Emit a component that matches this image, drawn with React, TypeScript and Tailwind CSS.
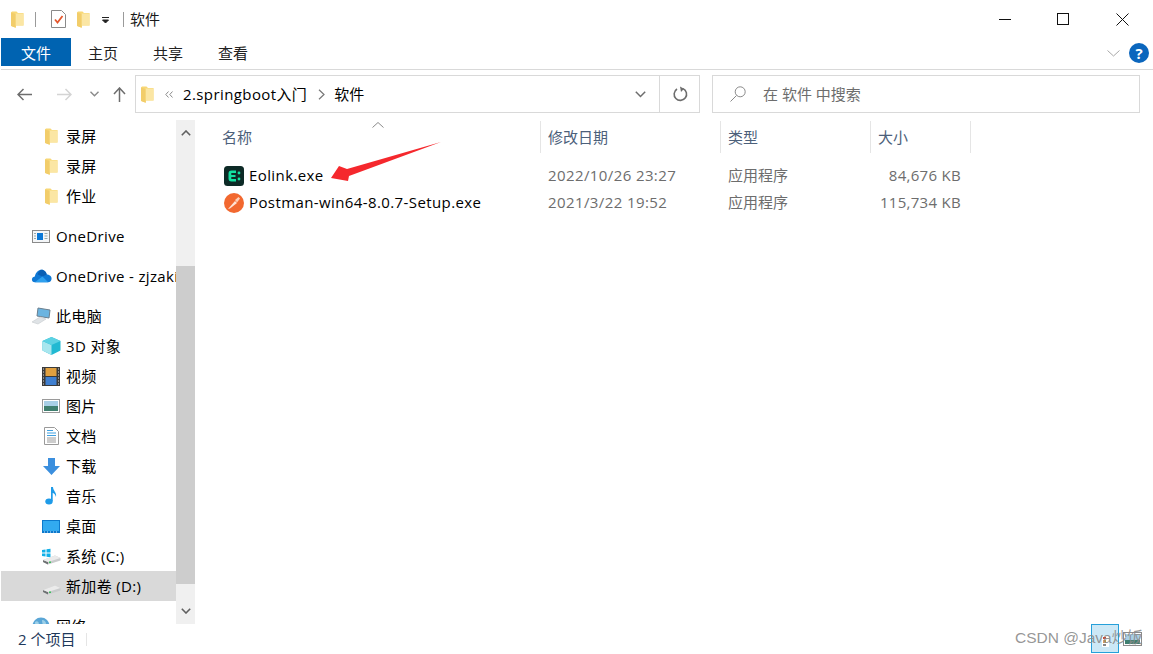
import React from "react";

const FONT = '"Open Sans","Noto Sans CJK SC",sans-serif';

function Folder({ className = "" }: { className?: string }) {
  return (
    <svg viewBox="0 0 13 17" className={className} width="13" height="17">
      <path d="M0 1.5 L1 .5 L5.5 .5 L7 2 L12.5 2 L12.5 14.5 L5 14.5 L5 16.8 L0.5 15 Z" fill="#f8d775" />
      <path d="M4.5 2.5 L12.5 2.5 L12.5 14.5 L4.5 14.5 Z" fill="#fbe6a4" />
      <path d="M0 1.5 L4.5 3 L4.5 16.8 L0 15 Z" fill="#f2cd6a" />
    </svg>
  );
}

function SidebarRow({
  label,
  icon,
  indent = 1,
  selected = false,
  mt = false,
}: {
  label: string;
  icon: React.ReactNode;
  indent?: 0 | 1;
  selected?: boolean;
  mt?: boolean;
}) {
  return (
    <div
      className={`h-[30px] shrink-0 flex items-center whitespace-nowrap overflow-hidden ${selected ? "bg-[#d9d9d9]" : ""} ${mt ? "mt-[10px]" : ""}`}
    >
      <div className={`shrink-0 flex justify-center items-center ${indent ? "ml-[40px] w-[20px] mr-[5px]" : "ml-[29px] w-[22px] mr-[4px]"}`}>
        {icon}
      </div>
      <span className="text-[15px] tracking-[0.35px] text-black mt-[1px]">{label}</span>
    </div>
  );
}

const I = {
  Screen: () => (
    <svg width="18" height="15" viewBox="0 0 18 15">
      <rect x=".5" y="1.5" width="17" height="12" fill="#f4f6f8" stroke="#8a8a8a" />
      <rect x="5" y="4" width="6" height="7" fill="#0a78d7" />
      <path d="M12.5 4.5h3M12.5 7h3M12.5 9.5h3M2 4.5h2M2 7h2M2 9.5h2" stroke="#9aa" />
    </svg>
  ),
  Cloud: () => (
    <svg width="21" height="14" viewBox="0 0 22 14">
      <path d="M4 13.5 C0 13.5 0 8 4 7.5 C5 3 8 .5 11 .5 C14 .5 16 3 16.5 5.5 C20 5.5 22 8 21.5 10.5 C21 12.5 20 13.5 18 13.5 Z" fill="#0f78d4" />
      <path d="M7 5.5 C8 2 10 .5 11 .5 C14 .5 16 3 16.5 5.5 L12 7.5 Z" fill="#0a5fb4" />
      <path d="M4 13.5 L12 7.5 L18 13.5 Z" fill="#2ea0ee" />
    </svg>
  ),
  PC: () => (
    <svg width="20" height="18" viewBox="0 0 20 18">
      <path d="M7 1 L19 3 L18 11 L6 9 Z" fill="#6bb4e0" stroke="#6b7f8e" />
      <path d="M1 15 L9 10 L15 12 L7 17 Z" fill="#dfe3e6" stroke="#c4c9cc" strokeWidth=".6" />
    </svg>
  ),
  Cube: () => (
    <svg width="19" height="18" viewBox="0 0 19 18">
      <path d="M9.5 0 L18.5 4 L18.5 13.5 L9.5 18 L.5 13.5 L.5 4 Z" fill="#21b9d2" />
      <path d="M.5 4 L9.5 8 L9.5 18 L.5 13.5 Z" fill="#a8e6ee" />
      <path d="M9.5 0 L18.5 4 L9.5 8 L.5 4 Z" fill="#5dd2e3" />
    </svg>
  ),
  Film: () => (
    <svg width="18" height="19" viewBox="0 0 18 19">
      <rect width="18" height="19" fill="#3a3a3a" />
      <rect x="3.5" y="1" width="11" height="8" fill="#e0a040" />
      <rect x="3.5" y="10" width="11" height="8" fill="#3f7fd0" />
      <path d="M1 2h1M1 5h1M1 8h1M1 11h1M1 14h1M1 17h1M16 2h1M16 5h1M16 8h1M16 11h1M16 14h1M16 17h1" stroke="#ddd" />
    </svg>
  ),
  Pic: () => (
    <svg width="18" height="14" viewBox="0 0 18 14">
      <rect x=".5" y=".5" width="17" height="13" fill="#fff" stroke="#9a9a9a" />
      <rect x="2" y="2" width="14" height="5" fill="#a8cfe6" />
      <rect x="2" y="7" width="14" height="5" fill="#3f7f6f" />
    </svg>
  ),
  Doc: () => (
    <svg width="15" height="18" viewBox="0 0 15 18">
      <path d="M.5 .5 L10.5 .5 L14.5 4.5 L14.5 17.5 L.5 17.5 Z" fill="#fff" stroke="#9a9a9a" />
      <path d="M3 3.5h6M3 6h9M3 8.5h9" stroke="#3fa0e0" />
      <path d="M3 11h9M3 13h9M3 15h9" stroke="#9a9a9a" />
    </svg>
  ),
  Down: () => (
    <svg width="17" height="17" viewBox="0 0 17 17">
      <path d="M5 0 L12 0 L12 8 L17 8 L8.5 17 L0 8 L5 8 Z" fill="#3b8fde" />
    </svg>
  ),
  Music: () => (
    <svg width="12" height="18" viewBox="0 0 12 18">
      <ellipse cx="4" cy="14.5" rx="3.7" ry="3" fill="#1e9be8" />
      <path d="M6 14 L6 0 L8 0 C8 4 12 5 11 10 C10 7 9 6 7.7 6 L7.7 14 Z" fill="#1e9be8" />
    </svg>
  ),
  Desktop: () => (
    <svg width="18" height="13" viewBox="0 0 18 13">
      <rect width="18" height="13" fill="#0c79cc" />
      <rect x="1" y="1" width="16" height="10" fill="#32aaf0" />
      <path d="M2 12h14" stroke="#cfeaff" strokeDasharray="1 2" />
    </svg>
  ),
  Drive: ({ win }: { win?: boolean }) => (
    <svg width="19" height="17" viewBox="0 0 19 17">
      {win && <path d="M0 2 L3.5 1.5 L3.5 4.5 L0 4.5 Z M4.5 1.3 L8.5 .7 L8.5 4.5 L4.5 4.5 Z M0 5.5 L3.5 5.5 L3.5 8.5 L0 8 Z M4.5 5.5 L8.5 5.5 L8.5 9.3 L4.5 8.7 Z" fill="#12b0e8" />}
      <path d="M1 12 L13 7.5 L18.5 10 L18.5 12.5 L6 16.5 L1 14 Z" fill="#c9cbcc" />
      <path d="M1 12 L6 14 L6 16.5 L1 14 Z" fill="#6f7173" />
      <path d="M6 14 L18.5 10 L13 7.5 L1 12 Z" fill="#ebebeb" />
      <rect x="7" y="13.5" width="2" height="1.5" fill="#3fbf5f" />
    </svg>
  ),
  Globe: () => (
    <svg width="18" height="18" viewBox="0 0 18 18">
      <circle cx="9" cy="9" r="8.5" fill="#5aa6d6" />
      <path d="M3 5 C6 3 8 6 6 9 C4 10 3 8 3 5 M10 3 C14 3 15 7 13 10 C11 9 10 6 10 3" fill="#9ccfe8" />
    </svg>
  ),
};

function Header({ w, label, sort, first }: { w: number; label: string; sort?: boolean; first?: boolean }) {
  return (
    <div style={{ width: w }} className={`relative h-[32px] shrink-0 border-r border-[#e5e5e5] flex items-center text-[15px] text-[#4c607a] ${first ? "pl-[9px]" : "pl-[7px]"}`}>
      {sort && (
        <svg className="absolute left-[159px] top-[1px]" width="12" height="6" viewBox="0 0 12 6">
          <path d="M.5 5.5 L6 .5 L11.5 5.5" fill="none" stroke="#8a8a8a" />
        </svg>
      )}
      <span className="mt-[1px]">{label}</span>
    </div>
  );
}

function FileRow({ icon, name, date, size }: { icon: React.ReactNode; name: string; date: string; size: string }) {
  return (
    <div className="h-[27px] flex items-center whitespace-nowrap text-[15px]">
      <div className="w-[25px] ml-[29px] shrink-0">{icon}</div>
      <div className="w-[299px] shrink-0 tracking-[0.4px] text-black">{name}</div>
      <div className="w-[180px] shrink-0 tracking-[0.4px] text-[#6d6d6d]">{date}</div>
      <div className="w-[80px] shrink-0 text-[#6d6d6d]">应用程序</div>
      <div className="w-[153px] shrink-0 tracking-[0.3px] text-right text-[#6d6d6d]">{size}</div>
    </div>
  );
}

export default function App() {
  return (
    <div className="relative w-[1153px] h-[654px] bg-white overflow-hidden flex flex-col" style={{ fontFamily: FONT }}>
      {/* title bar */}
      <div className="h-[38px] shrink-0 flex items-center text-[15px] text-[#1a1a1a]">
        <Folder className="ml-[11px]" />
        <div className="ml-[11px] w-px h-[15px] bg-[#9a9a9a]" />
        <svg className="ml-[15px]" width="15" height="18" viewBox="0 0 15 18">
          <path d="M.5 .5 L10.5 .5 L14.5 4.5 L14.5 17.5 L.5 17.5 Z" fill="#fff" stroke="#8a8a8a" />
          <path d="M4 9.5 L6.5 12.5 L11.5 6" fill="none" stroke="#e4572e" strokeWidth="1.8" />
        </svg>
        <Folder className="ml-[11px]" />
        <svg className="ml-[12px] mt-[3px]" width="8" height="7" viewBox="0 0 8 7">
          <path d="M0 0.5 H7 M0.5 3 L6.5 3 L3.5 6 Z" stroke="#222" fill="#222" strokeWidth="1" />
        </svg>
        <div className="ml-[13px] w-px h-[15px] bg-[#9a9a9a]" />
        <span className="ml-[6px] mt-[1px]">软件</span>
        <div className="ml-auto flex items-center">
          <svg width="13" height="13" viewBox="0 0 13 13"><path d="M0 6.5 H12" stroke="#111" /></svg>
          <svg className="ml-[45px]" width="13" height="13" viewBox="0 0 13 13"><rect x=".5" y=".5" width="11" height="11" fill="none" stroke="#111" /></svg>
          <svg className="ml-[46px] mr-[24px]" width="13" height="13" viewBox="0 0 13 13"><path d="M.5 .5 L12.5 12.5 M12.5 .5 L.5 12.5" stroke="#111" /></svg>
        </div>
      </div>

      {/* ribbon */}
      <div className="h-[32px] shrink-0 ml-px border-b border-[#d9d9d9] flex text-[15px] text-[#222] relative">
        <div className="w-[70px] h-[28px] bg-[#0063b1] text-white flex items-center justify-center pt-[2px]">文件</div>
        <div className="ml-[17px] h-[28px] flex items-center gap-[35px] pt-[2px]">
          <span>主页</span>
          <span>共享</span>
          <span>查看</span>
        </div>
        <div className="ml-auto h-[28px] flex items-center mr-[4px] pt-[2px]">
          <svg width="13" height="7" viewBox="0 0 13 7"><path d="M.5 .5 L6.5 6 L12.5 .5" fill="none" stroke="#a8a8a8" /></svg>
          <div className="ml-[9px] w-[20px] h-[20px] rounded-full bg-[#0b66bd] text-white flex items-center justify-center text-[15px] font-bold leading-none">?</div>
        </div>
      </div>

      {/* address row */}
      <div className="h-[44px] shrink-0 flex items-start pt-[5px]">
        <div className="w-[135px] h-[38px] shrink-0 flex items-center">
          <svg className="ml-[17px]" width="16" height="13" viewBox="0 0 16 13"><path d="M15 6.5 H1.5 M6.5 1 L1 6.5 L6.5 12" fill="none" stroke="#6d6d6d" strokeWidth="1.5" /></svg>
          <svg className="ml-[23px]" width="16" height="13" viewBox="0 0 16 13"><path d="M1 6.5 H14.5 M9.5 1 L15 6.5 L9.5 12" fill="none" stroke="#d4d4d4" strokeWidth="1.5" /></svg>
          <svg className="ml-[18px]" width="9" height="6" viewBox="0 0 9 6"><path d="M.5 .8 L4.5 4.8 L8.5 .8" fill="none" stroke="#8a8a8a" strokeWidth="1.4" /></svg>
          <svg className="ml-[14px]" width="13" height="15" viewBox="0 0 13 15"><path d="M6.5 15 V1.5 M1 7 L6.5 1 L12 7" fill="none" stroke="#6d6d6d" strokeWidth="1.5" /></svg>
        </div>
        <div className="w-[565px] h-[38px] shrink-0 border border-[#d9d9d9] flex items-center">
          <Folder className="ml-[5px]" />
          <svg className="ml-[11px]" width="8" height="7" viewBox="0 0 8 7"><path d="M3.5 .5 L.8 3.5 L3.5 6.5 M7.5 .5 L4.8 3.5 L7.5 6.5" fill="none" stroke="#8a8a8a" /></svg>
          <span className="ml-[10px] text-[15px] tracking-[0.4px] text-black mt-[1px]">2.springboot入门</span>
          <svg className="ml-[11px]" width="7" height="11" viewBox="0 0 7 11"><path d="M1 .8 L6 5.5 L1 10.2" fill="none" stroke="#777" strokeWidth="1.2" /></svg>
          <span className="ml-[9px] text-[15px] text-black mt-[1px]">软件</span>
          <div className="ml-auto flex items-center h-full">
            <svg className="mr-[13px]" width="11" height="7" viewBox="0 0 11 7"><path d="M.8 .8 L5.5 5.5 L10.2 .8" fill="none" stroke="#6d6d6d" strokeWidth="1.5" /></svg>
            <div className="w-[40px] h-full border-l border-[#d9d9d9] flex items-center justify-center pl-[3px]">
              <svg width="16" height="16" viewBox="0 0 16 16"><path d="M10 2.6 A6.2 6.2 0 1 1 4 3" fill="none" stroke="#6d6d6d" strokeWidth="1.6" /><path d="M7 .5 L11 2.8 L8 6 Z" fill="#6d6d6d" /></svg>
            </div>
          </div>
        </div>
        <div className="ml-[12px] w-[428px] h-[38px] shrink-0 border border-[#d9d9d9] flex items-center">
          <svg className="ml-[17px]" width="16" height="16" viewBox="0 0 16 16"><circle cx="10.2" cy="5.8" r="5" fill="none" stroke="#8a8a8a" /><path d="M6.5 9.5 L.5 15.5" stroke="#8a8a8a" /></svg>
          <span className="ml-[17px] text-[15px] text-[#6d6d6d] mt-[1px]">在 软件 中搜索</span>
        </div>
      </div>

      {/* body */}
      <div className="flex-1 min-h-0 flex">
        <div className="w-[175px] shrink-0 ml-px pt-[7px] flex flex-col overflow-hidden">
          <SidebarRow label="录屏" icon={<Folder />} />
          <SidebarRow label="录屏" icon={<Folder />} />
          <SidebarRow label="作业" icon={<Folder />} />
          <SidebarRow mt indent={0} label="OneDrive" icon={<I.Screen />} />
          <SidebarRow mt indent={0} label="OneDrive - zjzaki" icon={<I.Cloud />} />
          <SidebarRow mt indent={0} label="此电脑" icon={<I.PC />} />
          <SidebarRow label="3D 对象" icon={<I.Cube />} />
          <SidebarRow label="视频" icon={<I.Film />} />
          <SidebarRow label="图片" icon={<I.Pic />} />
          <SidebarRow label="文档" icon={<I.Doc />} />
          <SidebarRow label="下载" icon={<I.Down />} />
          <SidebarRow label="音乐" icon={<I.Music />} />
          <SidebarRow label="桌面" icon={<I.Desktop />} />
          <SidebarRow label="系统 (C:)" icon={<I.Drive win />} />
          <SidebarRow selected label="新加卷 (D:)" icon={<I.Drive />} />
          <SidebarRow mt indent={0} label="网络" icon={<I.Globe />} />
        </div>
        <div className="w-[19px] shrink-0 mt-[6px] bg-[#f0f0f0] flex flex-col items-stretch">
          <div className="h-[26px] flex items-center justify-center">
            <svg width="10" height="6" viewBox="0 0 10 6"><path d="M.8 5.2 L5 1 L9.2 5.2" fill="none" stroke="#606060" strokeWidth="1.6" /></svg>
          </div>
          <div className="mt-[120px] h-[318px] bg-[#cdcdcd]" />
          <div className="mt-auto h-[26px] flex items-center justify-center">
            <svg width="10" height="6" viewBox="0 0 10 6"><path d="M.8 .8 L5 5 L9.2 .8" fill="none" stroke="#606060" strokeWidth="1.6" /></svg>
          </div>
        </div>
        <div className="flex-1 min-w-0 flex flex-col">
          <div className="pt-[7px] flex">
            <div className="w-[18px] shrink-0" />
            <Header first w={328} label="名称" sort />
            <Header w={180} label="修改日期" />
            <Header w={150} label="类型" />
            <Header w={100} label="大小" />
          </div>
          <div className="mt-[9px]">
            <FileRow
              name="Eolink.exe"
              date="2022/10/26 23:27"
              size="84,676 KB"
              icon={
                <svg width="20" height="20" viewBox="0 0 20 20">
                  <rect width="20" height="20" rx="3.5" fill="#0d2a26" />
                  <path d="M12 4.5 H7.5 Q4.5 4.5 4.5 7.5 V12.5 Q4.5 15.5 7.5 15.5 H12 V13 H7.3 V11 H11.5 V9 H7.3 V7 H12 Z" fill="#13e0a0" />
                  <circle cx="15" cy="7" r="1.4" fill="#13e0a0" />
                  <circle cx="15" cy="13" r="1.4" fill="#13e0a0" />
                </svg>
              }
            />
            <FileRow
              name="Postman-win64-8.0.7-Setup.exe"
              date="2021/3/22 19:52"
              size="115,734 KB"
              icon={
                <svg width="20" height="20" viewBox="0 0 20 20">
                  <circle cx="10" cy="10" r="10" fill="#f2682f" />
                  <path d="M4 16 L11 8 L13 10 L6 15.5 Z" fill="#ffe3d4" />
                  <path d="M11 7 L14.5 4 L16 5.5 L13 9.5 Z" fill="#ffd0b8" />
                </svg>
              }
            />
          </div>
        </div>
      </div>

      {/* status bar */}
      <div className="h-[30px] shrink-0 flex items-center bg-white text-[15px] text-[#1e395b]">
        <span className="ml-[18px]">2 个项目</span>
        <div className="ml-[11px] w-px h-[13px] bg-[#e5e5e5]" />
        <div className="ml-auto mr-[11px] self-start flex items-center">
          <div className="w-[28px] h-[29px] border border-[#26a0da] bg-[#cce8f6] flex items-end justify-center pb-[5px]">
            <svg width="7" height="11" viewBox="0 0 7 11">
              <rect width="7" height="11" fill="#fff" />
              <rect x="1" y="1" width="3" height="2" fill="#c0503a" />
              <rect x="1" y="4" width="3" height="3" fill="#d8a040" />
              <rect x="1" y="8" width="3" height="2" fill="#888" />
            </svg>
          </div>
          <svg className="ml-[4px]" width="19" height="14" viewBox="0 0 19 14">
            <rect x=".5" y=".5" width="18" height="13" fill="#fff" stroke="#8a8a8a" />
            <rect x="2" y="2" width="15" height="6" fill="#a8cfe6" />
            <rect x="2" y="8" width="15" height="4" fill="#3f7f6f" />
          </svg>
        </div>
      </div>

      {/* annotations over the screenshot */}
      <svg className="absolute left-0 top-0 pointer-events-none" width="1153" height="654" viewBox="0 0 1153 654">
        <path d="M441 142 L347 169 L339 166 L331 178 L348 181 L349 176 Z" fill="#f5282d" />
      </svg>
      <div className="absolute left-[1015px] top-[626px] text-[15.5px] text-[#8a8a8a]/90 whitespace-nowrap pointer-events-none" style={{ fontFamily: '"Liberation Sans","Noto Sans CJK SC",sans-serif' }}>
        CSDN @Java炒饭
      </div>
    </div>
  );
}
